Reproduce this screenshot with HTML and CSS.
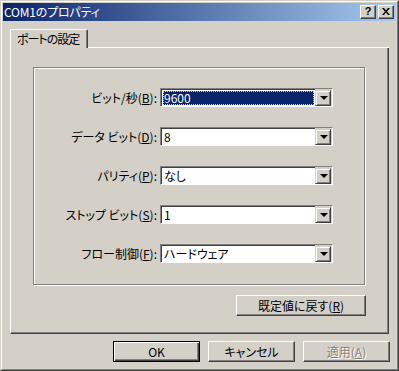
FILE: index.html
```html
<!DOCTYPE html>
<html lang="ja">
<head>
<meta charset="utf-8">
<title>COM1のプロパティ</title>
<link rel="stylesheet" href="styles.css">
</head>
<body>
<div class="window">
  <div class="frame">
    <div class="titlebar">
      <span class="title">COM1のプロパティ</span>
      <div class="capbtns">
        <span class="capbtn">?</span>
        <span class="capbtn close">
          <svg width="8" height="7" viewBox="0 0 8 7"><path d="M0 0h2l2 2.5 2-2.5h2l-3 3.5 3 3.5h-2l-2-2.5-2 2.5h-2l3-3.5z" fill="#000"/></svg>
        </span>
      </div>
    </div>
    <div class="client">
      <div class="tabs">
        <div class="tab">ポートの設定</div>
        <div class="tabfill"></div>
      </div>
      <div class="panel">
        <div class="group">
          <div class="form">
            <label class="lbl">ビット/秒(<u>B</u>):</label>
            <div class="combo">
              <div class="field"><span class="sel">9600</span></div>
              <span class="drop"><i class="tri"></i></span>
            </div>
            <label class="lbl">データ ビット(<u>D</u>):</label>
            <div class="combo">
              <div class="field"><span class="val">8</span></div>
              <span class="drop"><i class="tri"></i></span>
            </div>
            <label class="lbl">パリティ(<u>P</u>):</label>
            <div class="combo">
              <div class="field"><span class="val">なし</span></div>
              <span class="drop"><i class="tri"></i></span>
            </div>
            <label class="lbl">ストップ ビット(<u>S</u>):</label>
            <div class="combo">
              <div class="field"><span class="val">1</span></div>
              <span class="drop"><i class="tri"></i></span>
            </div>
            <label class="lbl">フロー制御(<u>F</u>):</label>
            <div class="combo">
              <div class="field"><span class="val">ハードウェア</span></div>
              <span class="drop"><i class="tri"></i></span>
            </div>
          </div>
        </div>
        <div class="resetrow">
          <button class="btn reset">既定値に戻す(<u>R</u>)</button>
        </div>
      </div>
      <div class="buttons">
        <button class="btn default">OK</button>
        <button class="btn">キャンセル</button>
        <button class="btn disabled">適用(<u>A</u>)</button>
      </div>
    </div>
  </div>
</div>
</body>
</html>
```
FILE: styles.css
```css
* { box-sizing: border-box; }
html, body { margin: 0; padding: 0; background: #d4d0c8; }
body {
  font-family: "Noto Sans CJK JP", "Liberation Sans", sans-serif;
  font-size: 12px;
  font-feature-settings: "palt" 1;
  color: #000;
}
u { text-decoration: underline; text-underline-offset: 1px; }

.window {
  width: 399px;
  height: 371px;
  background: #d4d0c8;
  border: 1px solid;
  border-color: #d4d0c8 #404040 #404040 #d4d0c8;
}
.frame {
  height: 100%;
  border: 1px solid;
  border-color: #fff #808080 #808080 #fff;
  padding: 1px;
  display: flex;
  flex-direction: column;
}

.titlebar {
  height: 18px;
  flex: none;
  background: linear-gradient(to right, #0a246a, #a6caf0);
  display: flex;
  align-items: center;
  justify-content: space-between;
  padding: 0 2px 0 1px;
}
.title {
  color: #fff;
  line-height: 18px;
  letter-spacing: -0.2px;
}
.capbtns { display: flex; gap: 2px; }
.capbtn {
  width: 16px;
  height: 14px;
  background: #d4d0c8;
  border: 1px solid;
  border-color: #fff #404040 #404040 #fff;
  box-shadow: inset -1px -1px 0 #808080;
  display: flex;
  align-items: center;
  justify-content: center;
  font-family: "Liberation Sans", sans-serif;
  font-weight: bold;
  font-size: 11px;
  line-height: 1;
  padding-bottom: 1px;
}

.client {
  flex: 1;
  padding: 8px 7px 0 7px;
  display: flex;
  flex-direction: column;
}

.tabs {
  display: flex;
  height: 19px;
  flex: none;
}
.tab {
  width: 78px;
  height: 19px;
  border-left: 1px solid #fff;
  border-top: 1px solid #fff;
  border-right: 1px solid #404040;
  border-top-left-radius: 2px;
  border-top-right-radius: 2px;
  box-shadow: inset -1px 0 0 #808080;
  padding-left: 6px;
  line-height: 17px;
  letter-spacing: -1px;
  white-space: nowrap;
}
.tabfill {
  flex: 1;
  border-bottom: 1px solid #fff;
}

.panel {
  height: 286px;
  flex: none;
  border-left: 1px solid #fff;
  border-right: 1px solid #404040;
  border-bottom: 1px solid #404040;
  box-shadow: inset -1px -1px 0 #808080;
  padding: 19px 23px 0 22px;
}

.group {
  height: 218px;
  border: 1px solid #808080;
  box-shadow: inset 1px 1px 0 #fff, 1px 1px 0 #fff;
  padding-top: 20px;
}
.form {
  display: grid;
  grid-template-columns: 123px 173px;
  column-gap: 3px;
  row-gap: 20px;
}
.lbl {
  text-align: right;
  line-height: 19px;
  white-space: nowrap;
}

.combo {
  height: 19px;
  display: flex;
  background: #d4d0c8;
  border: 1px solid;
  border-color: #808080 #fff #fff #808080;
}
.field {
  flex: 1;
  background: #fff;
  border-top: 1px solid #404040;
  border-left: 1px solid #404040;
  padding: 1px;
  display: flex;
}
.val {
  padding-left: 1px;
  line-height: 14px;
}
.sel {
  flex: 1;
  background: #0a246a;
  color: #fff;
  outline: 1px dotted #d4d0c8;
  outline-offset: -1px;
  padding-left: 1px;
  line-height: 13px;
}
.drop {
  width: 16px;
  height: 16px;
  flex: none;
  margin-top: 1px;
  margin-right: 1px;
  background: #d4d0c8;
  border: 1px solid;
  border-color: #d4d0c8 #404040 #404040 #d4d0c8;
  box-shadow: inset 1px 1px 0 #fff, inset -1px -1px 0 #808080;
  display: flex;
  align-items: center;
  justify-content: center;
}
.tri {
  width: 0;
  height: 0;
  border-left: 4px solid transparent;
  border-right: 4px solid transparent;
  border-top: 4px solid #000;
  margin-left: 1px;
}

.btn {
  font: inherit;
  font-feature-settings: "palt" 1;
  color: #000;
  background: #d4d0c8;
  height: 21px;
  width: 87px;
  padding: 0;
  border: 1px solid;
  border-color: #fff #404040 #404040 #fff;
  box-shadow: inset -1px -1px 0 #808080;
  line-height: 17px;
  text-align: center;
  cursor: default;
}
.btn.default {
  border: 1px solid #000;
  box-shadow: inset 1px 1px 0 #fff, inset -1px -1px 0 #404040, inset -2px -2px 0 #808080;
}
.btn.disabled {
  color: #808080;
  text-shadow: 1px 1px 0 #fff;
}

.resetrow {
  display: flex;
  justify-content: flex-end;
  margin-top: 10px;
  margin-right: -1px;
}
.btn.reset { width: 130px; }

.buttons {
  display: flex;
  justify-content: flex-end;
  gap: 8px;
  margin-top: 7px;
  margin-right: -1px;
}
```
